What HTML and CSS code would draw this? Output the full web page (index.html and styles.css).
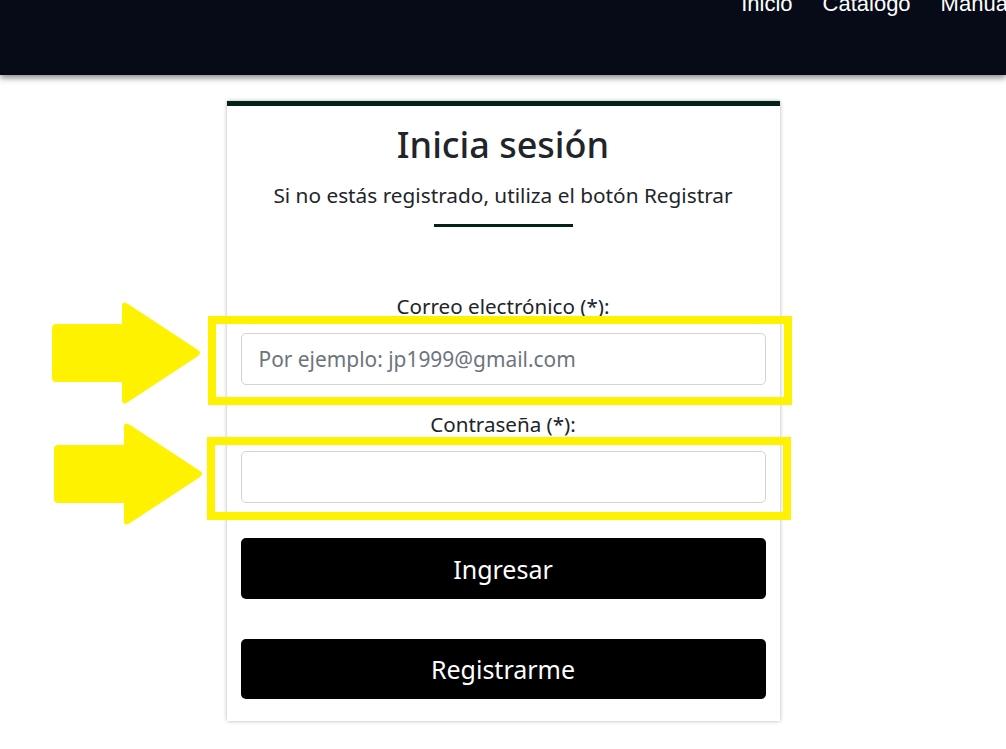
FILE: index.html
```html
<!DOCTYPE html>
<html lang="es">
<head>
<meta charset="utf-8">
<title>Inicia sesión</title>
<link rel="stylesheet" href="styles.css">
</head>
<body>
<header class="topbar">
  <nav class="nav">
    <a href="#" class="nav-link">Inicio</a>
    <a href="#" class="nav-link">Catalogo</a>
    <a href="#" class="nav-link">Manuales</a>
  </nav>
</header>
<main class="page">
  <section class="card">
    <h1 class="card-title">Inicia sesión</h1>
    <p class="card-subtitle">Si no estás registrado, utiliza el botón Registrar</p>
    <hr class="divider">
    <form class="form">
      <label class="form-label" for="email">Correo electrónico (*):</label>
      <input class="form-input" id="email" type="email" placeholder="Por ejemplo: jp1999@gmail.com">
      <label class="form-label form-label-second" for="pass">Contraseña (*):</label>
      <input class="form-input" id="pass" type="password">
      <button type="button" class="btn btn-first">Ingresar</button>
      <button type="button" class="btn btn-second">Registrarme</button>
    </form>
  </section>
</main>

<div class="mark mark-box mark-box-1"></div>
<div class="mark mark-box mark-box-2"></div>
<svg class="mark mark-arrow mark-arrow-1" width="160" height="110" viewBox="0 0 160 110">
  <path d="M6 24 H72 V6 Q72 0 78 4 L148 50 Q152 52 148 56 L78 102 Q72 106 72 100 V82 H6 Q2 82 2 78 V28 Q2 24 6 24 Z" fill="#fff200"/>
</svg>
<svg class="mark mark-arrow mark-arrow-2" width="160" height="110" viewBox="0 0 160 110">
  <path d="M6 24 H72 V6 Q72 0 78 4 L148 50 Q152 52 148 56 L78 102 Q72 106 72 100 V82 H6 Q2 82 2 78 V28 Q2 24 6 24 Z" fill="#fff200"/>
</svg>
</body>
</html>
```
FILE: styles.css
```css
html, body {
  margin: 0;
  padding: 0;
  background: #ffffff;
}
body {
  position: relative;
  font-family: "Noto Sans", "Open Sans", sans-serif;
  color: #212529;
  min-height: 749px;
}
.topbar {
  height: 75px;
  background: #070b17;
  box-shadow: 0 3px 6px rgba(0, 0, 0, 0.45);
  overflow: hidden;
  display: flex;
  justify-content: flex-end;
}
.nav {
  display: flex;
  gap: 30px;
  margin-top: -7px;
  margin-right: -30px;
  height: 22px;
}
.nav-link {
  font-family: "Liberation Sans", Arial, sans-serif;
  font-size: 22px;
  line-height: 22px;
  color: #ffffff;
  text-decoration: none;
  white-space: nowrap;
}
.page {
  padding-top: 26px;
  display: flex;
  justify-content: center;
}
.card {
  width: 553px;
  box-sizing: border-box;
  border-top: 5px solid #03221a;
  box-shadow: 0 0 4px rgba(0, 0, 0, 0.3);
  background: #fff;
  padding: 0 14px 22px 14px;
  text-align: center;
}
.card-title {
  margin: 14px 0 0;
  font-size: 36px;
  font-weight: 500;
  line-height: 50px;
}
.card-subtitle {
  margin: 12px 0 0;
  font-size: 20.8px;
  line-height: 26px;
}
.divider {
  width: 139px;
  height: 3px;
  margin: 16px auto 0;
  border: 0;
  background: #03221a;
}
.form {
  display: flex;
  flex-direction: column;
  margin-top: 67px;
}
.form-label {
  font-size: 20.6px;
  line-height: 24px;
  margin-bottom: 15px;
}
.form-label-second {
  margin-top: 27px;
}
.form-input {
  height: 52px;
  box-sizing: border-box;
  border: 1px solid #ced4da;
  border-radius: 5px;
  padding: 0 17px;
  font-family: "Noto Sans", "Open Sans", sans-serif;
  font-size: 20.9px;
  color: #212529;
  outline: none;
}
.form-input::placeholder {
  color: #6c757d;
}
.btn {
  height: 61px;
  border: 0;
  border-radius: 5px;
  background: #000;
  color: #fff;
  font-family: "Noto Sans", "Open Sans", sans-serif;
  font-size: 25px;
  cursor: pointer;
}
.btn-first {
  margin-top: 35px;
}
.btn-second {
  margin-top: 40px;
  height: 60px;
}

/* yellow annotation overlays */
.mark {
  position: absolute;
  pointer-events: none;
}
.mark-box {
  border: 8px solid #fff200;
  box-sizing: border-box;
  width: 584px;
  left: 208px;
}
.mark-box-1 {
  top: 316px;
  height: 89px;
}
.mark-box-2 {
  top: 437px;
  height: 83px;
  left: 207px;
}
.mark-arrow-1 {
  left: 50px;
  top: 300px;
}
.mark-arrow-2 {
  left: 52px;
  top: 421px;
}
```
